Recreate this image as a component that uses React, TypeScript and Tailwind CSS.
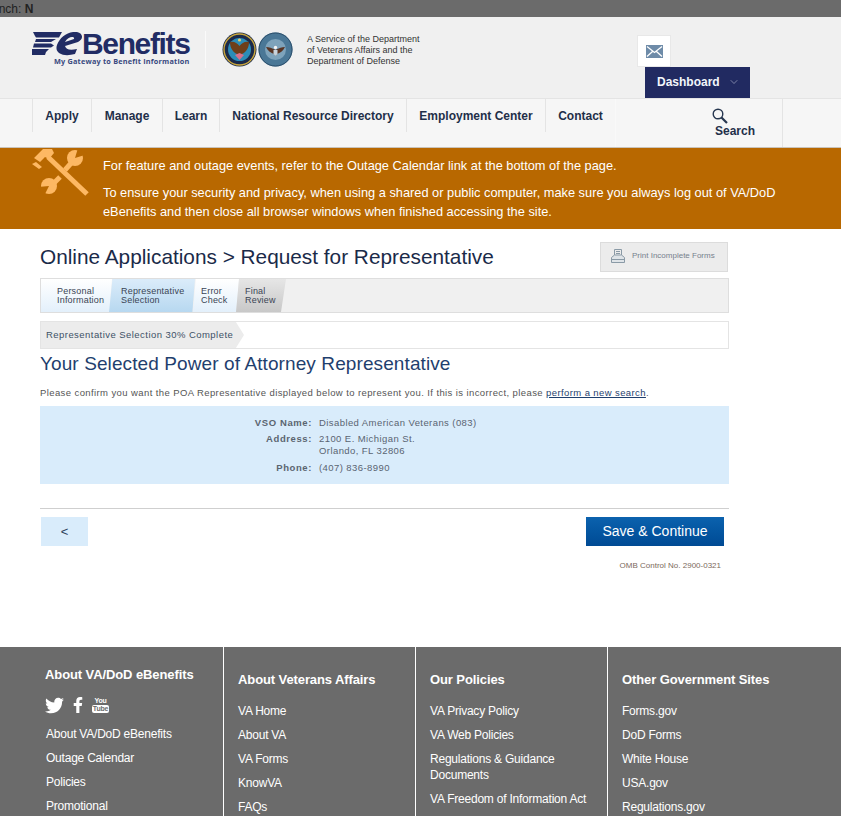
import { FaTwitter, FaFacebookF } from 'react-icons/fa'
import { ChevronDown } from 'lucide-react'

const navItems = ['Apply', 'Manage', 'Learn', 'National Resource Directory', 'Employment Center', 'Contact']

const navWidths = ['w-[59px]', 'w-[71px]', 'w-[57px]', 'w-[187px]', 'w-[139px]', 'w-[70px]']

const footerColumns = [
  {
    title: 'About Veterans Affairs',
    links: ['VA Home', 'About VA', 'VA Forms', 'KnowVA', 'FAQs'],
  },
  {
    title: 'Our Policies',
    links: ['VA Privacy Policy', 'VA Web Policies', 'Regulations & Guidance Documents', 'VA Freedom of Information Act'],
  },
  {
    title: 'Other Government Sites',
    links: ['Forms.gov', 'DoD Forms', 'White House', 'USA.gov', 'Regulations.gov'],
  },
]

function Logo() {
  return (
    <div className="relative h-[34px] w-[159px]">
      <svg width="52" height="24" viewBox="0 0 52 24" className="absolute left-0 top-0">
        <path d="M1 0h29l-3 5.500H4l-1-1.500zM4 7h20l-5 3H3zM2 11.500h17l3 2-3 2H1zM0 17h17l-3 3-1 3H0z" fill="#212c64" />
        <path d="M25 13C28 5 36-1 45 0c6 1 7 7 1 10l-13 4c1 3 4 5 12 3l-2 5c-11 3-21 0-18-9zm8-3 9-3c1-3-6-3-9 3z" fill="#212c64" />
      </svg>
      <span className="absolute left-[50px] top-0 text-[30px] font-bold leading-[24px] tracking-[-1.35px] text-[#212c64]">
        Benefits
      </span>
      <span className="absolute left-[22px] top-[24px] whitespace-nowrap text-[7.3px] font-bold leading-[10px] tracking-[0.2px] text-[#3a4a80] [font-family:'Open_Sans',sans-serif]">
        My Gateway to Benefit Information
      </span>
    </div>
  )
}

function VaSeal() {
  return (
    <svg width="35" height="35" viewBox="0 0 35 35">
      <circle cx="17.5" cy="17.5" r="17" fill="#1b2a4a" />
      <circle cx="17.5" cy="17.5" r="15.5" fill="none" stroke="#c9a63c" strokeWidth="1.4" />
      <circle cx="17.5" cy="17.5" r="11.5" fill="#2b8db8" />
      <path d="M8 10c4-1 7 1 9.500 4 2.500-3 5.500-5 9.500-4 0 6-3 10-7 12l-2.500 2-2.500-2c-4-2-7-6-7-12z" fill="#6e3f1a" />
      <path d="M13 23l4.500 5 4.500-5-4.500-2z" fill="#d8708a" />
      <circle cx="17.5" cy="8" r="1.6" fill="#e6cf6a" />
    </svg>
  )
}

function DodSeal() {
  return (
    <svg width="35" height="35" viewBox="0 0 35 35">
      <circle cx="17.5" cy="17.5" r="17" fill="#4a7796" />
      <circle cx="17.5" cy="17.5" r="16.5" fill="none" stroke="#2c4f6c" strokeWidth="1" />
      <circle cx="17.5" cy="17.5" r="10.5" fill="#7ea3bb" />
      <path d="M8 15c3 0 6 1 9.500 3 3.500-2 6.500-3 9.500-3-2 4-5 6-8 7l-1.500 2-1.500-2c-3-1-6-3-8-7z" fill="#5a3524" />
      <circle cx="17.5" cy="15.5" r="1.7" fill="#f3f3f3" />
      <path d="M15.500 18h4v4l-2 2-2-2z" fill="#c8d3dc" />
    </svg>
  )
}

function ToolsIcon() {
  return (
    <svg width="58" height="50" viewBox="0 0 58 50">
      <path d="M12 1h9l2 4-5 6-4-2-5 5-6-4zM1 16l4-2 6 5-3 2z" fill="#fdb863" />
      <path d="M17 9l39 37" stroke="#fdb863" strokeWidth="5" />
      <path d="M34 22l8-9M29 29l-8 8" stroke="#fdb863" strokeWidth="5" />
      <circle cx="44" cy="10" r="8" fill="#fdb863" />
      <path d="M44 10l3-10 10 6z" fill="#b86800" />
      <circle cx="18" cy="38" r="8" fill="#fdb863" />
      <path d="M18 38l-11 1 6 9z" fill="#b86800" />
    </svg>
  )
}

function PrinterIcon() {
  return (
    <svg width="14" height="15" viewBox="0 0 14 15" fill="none" stroke="#8a9aa6" strokeWidth="1">
      <path d="M3.500 6V.5h7V6M5 2.500h4M5 4.500h4" />
      <path d="M.5 8.500l3-2.500h7l3 2.500v5h-13z" fill="#dfe4e8" />
      <path d="M.5 10.500h13" />
    </svg>
  )
}

function MailIcon() {
  return (
    <svg width="17" height="13" viewBox="0 0 17 13">
      <rect width="17" height="13" fill="#6e8ba8" />
      <path d="M1 1.500l7.500 6 7.500-6M1 11.500l5.500-5M16 11.500l-5.500-5" stroke="#fff" strokeWidth="1.300" fill="none" />
    </svg>
  )
}

function SearchIcon() {
  return (
    <svg width="16" height="16" viewBox="0 0 16 16" fill="none" stroke="#26364f">
      <circle cx="6" cy="6" r="4.8" strokeWidth="1.4" />
      <path d="M9.500 9.500l5.500 5.500" strokeWidth="2.2" />
    </svg>
  )
}

function YoutubeIcon() {
  return (
    <div className="flex w-[17px] flex-col items-center">
      <span className="text-[7px] font-bold leading-[7px] text-white">You</span>
      <span className="mt-[1px] rounded-[2px] bg-white px-[1px] text-[7px] font-bold leading-[8px] text-[#6b6b6b]">Tube</span>
    </div>
  )
}

function Header() {
  return (
    <header className="flex h-[81px] bg-[#f0f0f0]">
      <div className="ml-[32px] mt-[15px]">
        <Logo />
      </div>
      <div className="ml-[14px] mt-[14px] h-[37px] w-px bg-[#fafafa]" />
      <div className="ml-[16px] mt-[15px] flex h-[35px] gap-px">
        <VaSeal />
        <DodSeal />
      </div>
      <p className="ml-[14px] mt-[17px] w-[115px] text-[9px] leading-[11px] text-[#333]">
        A Service of the Department of Veterans Affairs and the Department of Defense
      </p>
      <div className="ml-[215px] mt-[18px] flex flex-col items-start">
        <div className="flex h-[32px] w-[34px] items-center justify-center border border-[#e8e8e8] bg-white">
          <MailIcon />
        </div>
        <div className="ml-[8px] flex h-[31px] w-[105px] items-center bg-[#212a61] pb-[2px] pl-[12px] text-[12px] font-bold text-[#f2f6fb]">
          Dashboard
          <ChevronDown size={12} strokeWidth={1} className="ml-[8px] text-[#d5d9e8]" />
        </div>
      </div>
    </header>
  )
}

function Nav() {
  return (
    <nav className="flex h-[49px] border-t border-[#e4e4e4] bg-[#f6f6f6] pl-[32px]">
      {navItems.map((item, i) => (
        <div
          key={item}
          className={`flex h-[33px] shrink-0 items-center justify-center border-l border-[#e4e4e4] text-[12px] font-bold text-[#1f2f49] ${navWidths[i]}`}
        >
          {item}
        </div>
      ))}
      <div className="flex h-[48px] w-[168px] shrink-0 flex-col items-start border-x border-l-[#f9f9f9] border-r-[#e4e4e4] pl-[99px] pt-[9px]">
        <div className="ml-[-3px] h-[16px]">
          <SearchIcon />
        </div>
        <span className="text-[12px] font-bold leading-[14px] text-[#1f2f49]">Search</span>
      </div>
    </nav>
  )
}

function Banner() {
  return (
    <section className="flex h-[82px] border-t border-[#c9c3bb] bg-[#b86800] text-[12.8px] text-white">
      <div className="ml-[31px] shrink-0">
        <ToolsIcon />
      </div>
      <div className="ml-[14px] w-[690px] pt-[9px]">
        <p className="leading-[18px]">For feature and outage events, refer to the Outage Calendar link at the bottom of the page.</p>
        <p className="mt-[8px] leading-[19px]">
          To ensure your security and privacy, when using a shared or public computer, make sure you always log out of VA/DoD eBenefits and then close all browser windows when finished accessing the site.
        </p>
      </div>
    </section>
  )
}

function Steps() {
  return (
    <div className="mt-[6px] flex h-[35px] border border-[#dedede] bg-[#f0f0f0] text-[9px] leading-[9px] tracking-[0.2px] text-[#3a4454]">
      <div className="flex w-[71px] items-center bg-gradient-to-b from-white to-[#e3f0fb] pl-[16px] [clip-path:polygon(0_0,100%_0,96%_100%,0_100%)]">
        <span>Personal<br />Information</span>
      </div>
      <div className="ml-[-3px] flex w-[86px] items-center bg-gradient-to-b from-[#dbecfa] to-[#b7d8f0] pl-[12px] [clip-path:polygon(4%_0,100%_0,97%_100%,0_100%)]">
        <span>Representative<br />Selection</span>
      </div>
      <div className="ml-[-2px] flex w-[46px] items-center bg-gradient-to-b from-white to-[#e3f0fb] pl-[8px] [clip-path:polygon(6%_0,100%_0,94%_100%,0_100%)]">
        <span>Error<br />Check</span>
      </div>
      <div className="ml-[-3px] flex w-[50px] items-center bg-gradient-to-b from-[#e6e6e6] to-[#c8c8c8] pl-[9px] [clip-path:polygon(6%_0,100%_0,90%_100%,0_100%)]">
        <span>Final<br />Review</span>
      </div>
    </div>
  )
}

function Content() {
  return (
    <main className="mx-[40px] h-[418px] w-[689px] text-[#3b4350]">
      <div className="flex h-[43px] items-start justify-between pr-px">
        <h1 className="mt-[14px] text-[20.8px] leading-[28px] text-[#1a2a49]">Online Applications &gt; Request for Representative</h1>
        <div className="mt-[13px] flex h-[30px] w-[128px] items-center border border-[#dcdcdc] bg-[#ececec] pb-[2px] pl-[10px] text-[8px] text-[#77818c]">
          <PrinterIcon />
          <span className="ml-[7px]">Print Incomplete Forms</span>
        </div>
      </div>
      <Steps />
      <div className="mt-[8px] h-[28px] border border-[#e4e4e4] bg-white">
        <div className="flex h-full w-[203px] items-center bg-[#ececec] pl-[5px] text-[9.5px] tracking-[0.45px] text-[#3d5166] [clip-path:polygon(0_0,96%_0,100%_50%,96%_100%,0_100%)]">
          Representative Selection 30% Complete
        </div>
      </div>
      <h2 className="mt-[3px] text-[19px] leading-[24px] tracking-[0.1px] text-[#1f3f6e]">Your Selected Power of Attorney Representative</h2>
      <p className="mt-[10px] text-[9.5px] leading-[14px] tracking-[0.4px] text-[#555]">
        Please confirm you want the POA Representative displayed below to represent you. If this is incorrect, please{' '}
        <span className="text-[#1f3f6e] underline">perform a new search</span>.
      </p>
      <div className="mt-[6px] flex h-[78px] flex-col gap-[4px] bg-[#d9ecfb] pl-[200px] pt-[11px] text-[9.5px] leading-[12px] tracking-[0.42px]">
        <div className="flex">
          <span className="w-[72px] text-right font-bold tracking-[0.6px] text-[#5b6570]">VSO Name:</span>
          <span className="ml-[7px] text-[#596472]">Disabled American Veterans (083)</span>
        </div>
        <div className="flex">
          <span className="w-[72px] text-right font-bold tracking-[0.6px] text-[#5b6570]">Address:</span>
          <span className="ml-[7px] text-[#596472]">2100 E. Michigan St.<br />Orlando, FL 32806</span>
        </div>
        <div className="mt-px flex">
          <span className="w-[72px] text-right font-bold tracking-[0.6px] text-[#5b6570]">Phone:</span>
          <span className="ml-[7px] text-[#596472]">(407) 836-8990</span>
        </div>
      </div>
      <div className="mt-[24px] border-t border-[#cfcfcf]" />
      <div className="mt-[8px] flex justify-between pl-px pr-[5px]">
        <button className="h-[29px] w-[47px] bg-[#d9ecfb] text-[13px] text-[#2b3e5a]">&lt;</button>
        <button className="h-[29px] w-[138px] bg-gradient-to-b from-[#0b62ae] to-[#004a94] text-[14px] text-white">Save &amp; Continue</button>
      </div>
      <p className="mt-[14px] pr-[8px] text-right text-[8px] leading-[12px] text-[#7b6a5c]">OMB Control No. 2900-0321</p>
    </main>
  )
}

function Footer() {
  return (
    <footer className="flex h-[169px] overflow-hidden bg-[#6b6b6b] text-[12px] tracking-[-0.22px] text-white">
      <div className="w-[224px] shrink-0 border-r border-white pl-[45px] pt-[20px]">
        <h3 className="text-[13px] font-bold leading-[16px] tracking-[-0.1px]">About VA/DoD eBenefits</h3>
        <div className="mt-[13px] flex h-[18px] items-center gap-[6px]">
          <FaTwitter size={19} />
          <FaFacebookF size={16} />
          <YoutubeIcon />
        </div>
        <ul className="ml-px mt-[8px]">
          {['About VA/DoD eBenefits', 'Outage Calendar', 'Policies', 'Promotional'].map(link => (
            <li key={link} className="h-[24px] leading-[24px]">{link}</li>
          ))}
        </ul>
      </div>
      {footerColumns.map((col, i) => (
        <div
          key={col.title}
          className={`w-[192px] shrink-0 pl-[14px] pt-[25px] ${i < 2 ? 'border-r border-white' : ''}`}
        >
          <h3 className="text-[13px] font-bold leading-[16px] tracking-[-0.1px]">{col.title}</h3>
          <ul className="mt-[15px]">
            {col.links.map(link => (
              <li key={link} className="mb-[8px] leading-[16px]">{link}</li>
            ))}
          </ul>
        </div>
      ))}
    </footer>
  )
}

export default function App() {
  return (
    <div className="h-[816px] w-[841px] overflow-hidden bg-white [font-family:'Liberation_Sans',Arial,sans-serif]">
      <div className="flex h-[17px] items-center bg-[#6b6b6b] text-[12px] text-[#222]">
        <span className="ml-[-20px] whitespace-nowrap">Branch: <b>N</b></span>
      </div>
      <Header />
      <Nav />
      <Banner />
      <Content />
      <Footer />
    </div>
  )
}
